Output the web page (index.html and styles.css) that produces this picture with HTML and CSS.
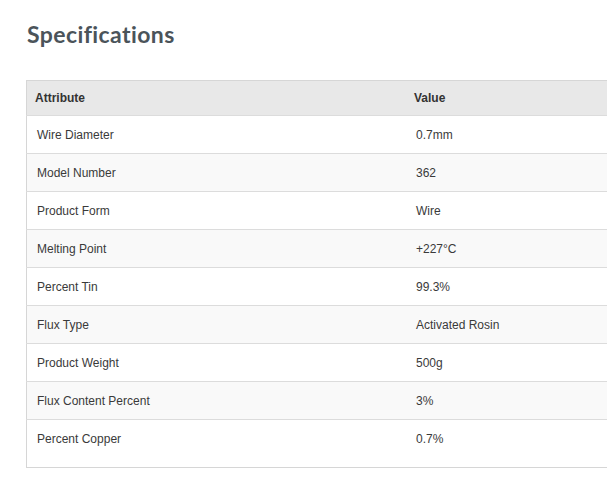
FILE: index.html
```html
<!DOCTYPE html>
<html>
<head>
<meta charset="utf-8">
<link rel="stylesheet" href="styles.css">
</head>
<body>
<div class="page">
  <h2 class="title">Specifications</h2>
  <table class="specs">
    <thead>
      <tr><th class="attr">Attribute</th><th>Value</th></tr>
    </thead>
    <tbody>
      <tr><td class="attr">Wire Diameter</td><td>0.7mm</td></tr>
      <tr><td class="attr">Model Number</td><td>362</td></tr>
      <tr><td class="attr">Product Form</td><td>Wire</td></tr>
      <tr><td class="attr">Melting Point</td><td>+227°C</td></tr>
      <tr><td class="attr">Percent Tin</td><td>99.3%</td></tr>
      <tr><td class="attr">Flux Type</td><td>Activated Rosin</td></tr>
      <tr><td class="attr">Product Weight</td><td>500g</td></tr>
      <tr><td class="attr">Flux Content Percent</td><td>3%</td></tr>
      <tr class="last"><td class="attr">Percent Copper</td><td>0.7%</td></tr>
    </tbody>
  </table>
</div>
</body>
</html>
```

FILE: styles.css
```css
html, body {
  margin: 0;
  padding: 0;
  background: #ffffff;
}
.page {
  padding: 20px 0 0 26px;
}
.title {
  margin: 0 0 32px 1px;
  font-family: "Lato", "DejaVu Sans", sans-serif;
  font-weight: 700;
  font-size: 23px;
  letter-spacing: 0.4px;
  line-height: 28px;
  color: #4b545a;
}
.specs {
  border-collapse: collapse;
  width: 581px;
  font-family: "Liberation Sans", Arial, sans-serif;
  font-size: 12px;
  color: #333;
  border: 1px solid #d6d6d6;
  border-right: none;
}
.specs th {
  background: #e8e8e8;
  font-weight: bold;
  text-align: left;
  height: 34px;
  padding: 0;
  color: #333;
}
.specs th.attr {
  padding: 0 0 0 8px;
  width: 379px;
}
.specs td {
  height: 37px;
  padding: 0 0 0 2px;
  border-top: 1px solid #dcdcdc;
  vertical-align: middle;
  color: #3a3a3a;
}
.specs td.attr {
  padding: 0 0 0 10px;
  width: 377px;
}
.specs tbody tr:nth-child(even) td {
  background: #f9f9f9;
}
.specs tr.last td {
  padding-bottom: 10px;
}
```
